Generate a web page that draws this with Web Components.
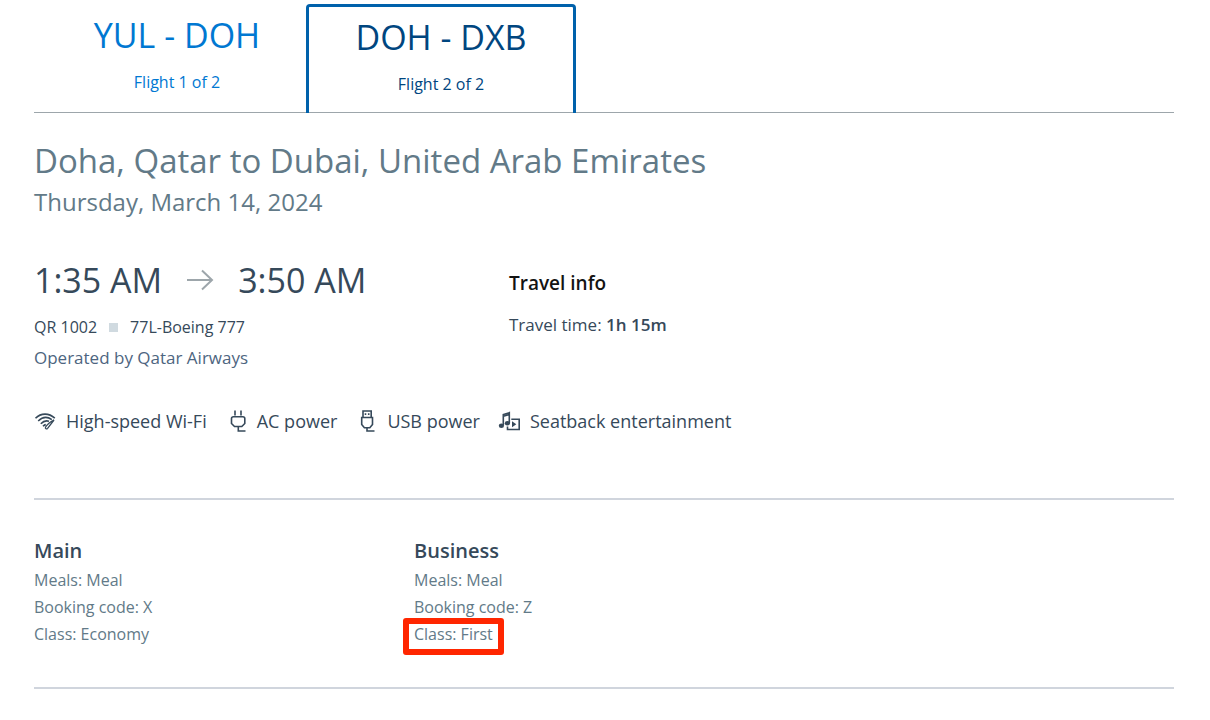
<!DOCTYPE html>
<html lang="en">
<head>
<meta charset="utf-8">
<meta name="viewport" content="width=device-width, initial-scale=1">
<title>Flight details</title>
<style>
  body{margin:0; background:#fff; color:#36495a; font:400 16px/24px "Open Sans","Noto Sans",sans-serif;}
</style>
</head>
<body>
<flight-details></flight-details>

<script>
// one tab of the trip: route code on top, position below
class FlightTab extends HTMLElement{
  constructor(){
    super();
    this.attachShadow({mode:'open'});
    this.shadowRoot.innerHTML = `
      <style>
        :host{display:block; width:258px; color:#0078d2}
        :host([selected]){width:270px; color:#00467f}
        button{display:flex; flex-direction:column; align-items:center; justify-content:flex-start; box-sizing:border-box;
          width:100%; height:108px; margin:0; padding:7px 0 0; border:0; background:none; color:inherit; font:inherit; cursor:pointer}
        :host([selected]) button{height:109px; padding-top:6px; border:3px solid #0061ab; border-bottom:0; border-radius:4px 4px 0 0}
        .code{font-size:34px; line-height:48px}
        .pos{font-size:16px; line-height:24px; margin-top:11px}
      </style>
      <button type="button" role="tab" aria-selected="${this.hasAttribute('selected')}">
        <span class="code"><slot name="code"></slot></span>
        <span class="pos"><slot></slot></span>
      </button>
    `;
  }
}
customElements.define('flight-tab', FlightTab);

const ICONS = {
  wifi: `<path d="M1.500 8.200C7 2.800 15 2.800 20.800 8.200M4.200 11C8.500 6.800 13.700 6.700 17.800 9.700M6.800 13.700C9.500 11 12.300 10.400 15 11.300M9 16.200C9.900 15.300 10.800 14.700 11.800 14.600"/>
    <path d="M20 10L13.600 18.300C12.600 19.500 10.800 18.600 11.600 17C13.200 14.400 16 12 20 10Z" stroke-width="1.300"/>`,
  plug: `<path d="M10 .5V5.500M16 .5V5.500M6.500 13.500V8.500Q6.500 6.700 8.500 6.700H17.800Q19.800 6.700 19.800 8.500V13.500L16.800 16.500H9.500ZM13.300 16.500V21H20.500"/>`,
  usb: `<path d="M8 7.500V1H16.200V7.500M6.700 7.500H17.500V14.500L14.800 17.800H9.400L6.700 14.500ZM12 17.800V21H19.500"/>
    <path d="M10.500 3.200V5M13.700 3.200V5"/>`,
  media: `<path d="M5.300 15.500V4.500L11.300 2.700V13M5.300 6.200L11.300 4.400"/><ellipse cx="3.400" cy="15.800" rx="2.600" ry="2.200" fill="currentColor" stroke="none"/>
    <ellipse cx="9.400" cy="13.200" rx="2.600" ry="2.200" fill="currentColor" stroke="none"/>
    <path d="M13.300 9.300H21.200V19.500H9.500V16.500"/><path d="M14 11.300V17.300L18.300 14.300Z" fill="currentColor" stroke="none"/>`,
};

class FlightAmenity extends HTMLElement{
  constructor(){
    super();
    this.attachShadow({mode:'open'});
    this.shadowRoot.innerHTML = `
      <style>
        :host{display:flex; align-items:center; gap:10px; font-size:18px; line-height:24px; white-space:nowrap}
        svg{flex:none; width:22px; height:22px; overflow:visible; fill:none; stroke:currentColor; stroke-width:1.600}
      </style>
      <svg viewBox="0 0 22 22" aria-hidden="true">${ICONS[this.getAttribute('icon')] || ''}</svg>
      <span><slot></slot></span>
    `;
  }
}
customElements.define('flight-amenity', FlightAmenity);

class CabinInfo extends HTMLElement{
  constructor(){
    super();
    this.attachShadow({mode:'open'});
    this.shadowRoot.innerHTML = `
      <style>
        :host{display:block; color:#627a88}
        h3{margin:0 0 2px; font-size:20px; line-height:28px; font-weight:600; color:#36495a}
        ::slotted(p){margin:0; width:max-content; font-size:16px; line-height:27px}
      </style>
      <h3><slot name="title"></slot></h3>
      <slot></slot>
    `;
  }
}
customElements.define('cabin-info', CabinInfo);

class FlightDetails extends HTMLElement{
  constructor(){
    super();
    this.attachShadow({mode:'open'});
    this.shadowRoot.innerHTML = `
      <style>
        :host{display:block; padding:4px 36px 32px 34px}
        .tabs{display:flex; padding-left:14px; border-bottom:1px solid #9da6ab}
        .tabs flight-tab[selected]{margin-bottom:-1px}
        h1,h2,p{margin:0}
        h1{padding-top:25px; font-size:33px; line-height:46px; font-weight:400; color:#627a88}
        .date{font-size:24px; line-height:36px; color:#627a88}
        .leg{display:grid; grid-template-columns:5fr 7fr; padding-top:32px}
        .times{display:flex; align-items:center; gap:24px; font-size:34px; line-height:56px}
        .times svg{width:28px; height:24px; fill:none; stroke:#9da6ab; stroke-width:2}
        .plane{display:flex; align-items:center; gap:12px; line-height:32px; margin-top:3px}
        .dot{width:9px; height:9px; background:#d0dae0}
        .operated{font-size:17px; line-height:30px; color:#4d6580}
        .info{padding-top:15px}
        h2{font-size:19px; line-height:32px; font-weight:600; color:#131313}
        .info p{font-size:17px; line-height:32px; margin-top:10px}
        .info b{font-weight:600}
        .amenities{display:flex; flex-wrap:wrap; gap:8px 18px; padding:36px 0 65px; border-bottom:2px solid #d0d5dd}
        .cabins{display:grid; grid-template-columns:repeat(3,1fr); padding:37px 0 39px; border-bottom:2px solid #d0d5dd}
        .mark{position:relative}
        .mark::after{content:""; position:absolute; inset:-3px -11px -7px -11px; border:6px solid #ff2600; border-radius:3px}
      </style>
      <div class="tabs" role="tablist">
        <flight-tab><span slot="code">YUL - DOH</span>Flight 1 of 2</flight-tab>
        <flight-tab selected><span slot="code">DOH - DXB</span>Flight 2 of 2</flight-tab>
      </div>
      <h1>Doha, Qatar to Dubai, United Arab Emirates</h1>
      <p class="date">Thursday, March 14, 2024</p>
      <section class="leg">
        <div>
          <div class="times">
            <span>1:35 AM</span>
            <svg viewBox="0 0 28 24" role="img" aria-label="to"><path d="M1 12H26M16 2.500L26 12L16 21.500"/></svg>
            <span>3:50 AM</span>
          </div>
          <div class="plane"><span>QR 1002</span><i class="dot"></i><span>77L-Boeing 777</span></div>
          <p class="operated">Operated by Qatar Airways</p>
        </div>
        <div class="info">
          <h2>Travel info</h2>
          <p>Travel time: <b>1h 15m</b></p>
        </div>
      </section>
      <div class="amenities">
        <flight-amenity icon="wifi">High-speed Wi-Fi</flight-amenity>
        <flight-amenity icon="plug">AC power</flight-amenity>
        <flight-amenity icon="usb">USB power</flight-amenity>
        <flight-amenity icon="media">Seatback entertainment</flight-amenity>
      </div>
      <div class="cabins">
        <cabin-info>
          <span slot="title">Main</span>
          <p>Meals: Meal</p>
          <p>Booking code: X</p>
          <p>Class: Economy</p>
        </cabin-info>
        <cabin-info>
          <span slot="title">Business</span>
          <p>Meals: Meal</p>
          <p>Booking code: Z</p>
          <p class="mark">Class: First</p>
        </cabin-info>
      </div>
    `;
  }
}
customElements.define('flight-details', FlightDetails);
</script>
</body>
</html>
